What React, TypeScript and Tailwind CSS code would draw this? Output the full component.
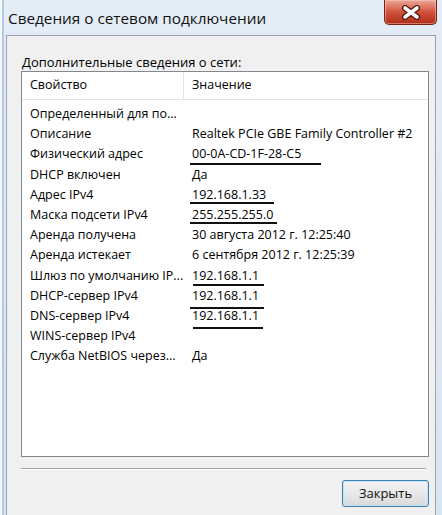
import React from "react";

const rows: [string, string][] = [
  ["Определенный для по...", ""],
  ["Описание", "Realtek PCIe GBE Family Controller #2"],
  ["Физический адрес", "00-0A-CD-1F-28-C5"],
  ["DHCP включен", "Да"],
  ["Адрес IPv4", "192.168.1.33"],
  ["Маска подсети IPv4", "255.255.255.0"],
  ["Аренда получена", "30 августа 2012 г. 12:25:40"],
  ["Аренда истекает", "6 сентября 2012 г. 12:25:39"],
  ["Шлюз по умолчанию IP...", "192.168.1.1"],
  ["DHCP-сервер IPv4", "192.168.1.1"],
  ["DNS-сервер IPv4", "192.168.1.1"],
  ["WINS-сервер IPv4", ""],
  ["Служба NetBIOS через...", "Да"],
];

const font = { fontFamily: '"Open Sans", "Noto Sans", sans-serif' };

export default function App() {
  return (
    <div
      className="w-[442px] h-[515px] overflow-hidden bg-[#f4f7fb] pl-[2px] text-[#000]"
      style={font}
    >
      <div className="h-full border-l-2 border-[#b3cbe2] flex flex-col bg-gradient-to-b from-[#e4edf6] to-[#d9e5f1]">
        {/* Title bar */}
        <div className="h-[35px] shrink-0 flex items-start justify-between">
          <div className="pl-[4px] pt-[8px] text-[15.3px] leading-[20px] text-[#111]">
            Сведения о сетевом подключении
          </div>
          <div className="mr-[5px] w-[53px] h-[25px] rounded-b-[5px] border border-t-0 border-[#7a2418] bg-gradient-to-b from-[#eaa897] via-[#d0523a] to-[#b02d19] shadow-[inset_0_0_0_1px_rgba(255,210,200,0.45)] flex items-center justify-center">
            <svg width="20" height="15" viewBox="0 0 20 15">
              <path
                d="M4 3 L16 12 M16 3 L4 12"
                stroke="#4a140d"
                strokeWidth="6"
                strokeLinecap="round"
              />
              <path
                d="M4 3 L16 12 M16 3 L4 12"
                stroke="#ffffff"
                strokeWidth="3.6"
                strokeLinecap="round"
              />
            </svg>
          </div>
        </div>

        {/* Client area */}
        <div className="flex-1 ml-[2px] mr-[6px] border-l border-t border-r border-[#9aa3ad] bg-[#f0f0f0] flex flex-col pl-[14px] pr-[6px]">
          <div className="pt-[18px] text-[13px] leading-[16px] pl-[1px] h-[35px]">
            Дополнительные сведения о сети:
          </div>
          <div className="relative h-[386px] border border-[#828790] bg-white">
            {/* header */}
            <div className="flex h-[28px] border-b border-[#e3e3e3] text-[12.5px]">
              <div className="w-[162px] border-r border-[#e3e3e3] pl-[8px] flex items-center">
                Свойство
              </div>
              <div className="flex-1 pl-[8px] flex items-center">Значение</div>
            </div>
            <div className="pt-[4px]">
              {rows.map(([k, v], i) => (
                <div key={i} className="flex h-[20.2px] items-center text-[12.5px] leading-[20px] whitespace-nowrap">
                  <div className="w-[162px] pl-[8px]">{k}</div>
                  <div className="flex-1 pl-[8px]">{v}</div>
                </div>
              ))}
            </div>
            {/* annotation underlines */}
            <div className="absolute left-[168px] top-[91px] w-[131px] h-[2px] bg-[#111]" />
            <div className="absolute left-[168px] top-[130px] w-[84px] h-[2px] bg-[#111]" />
            <div className="absolute left-[168px] top-[150px] w-[87px] h-[2px] bg-[#111]" />
            <div className="absolute left-[171px] top-[212px] w-[71px] h-[2px] bg-[#111]" />
            <div className="absolute left-[168px] top-[235px] w-[74px] h-[2px] bg-[#111]" />
            <div className="absolute left-[171px] top-[255px] w-[70px] h-[2px] bg-[#111]" />
          </div>
          <div className="mt-[11px] mr-[3px] h-[2px] border-t border-[#a0a0a0] border-b border-b-white" />
          <div className="flex justify-end pt-[10px]">
            <button className="w-[87px] h-[27px] rounded-[3px] border border-[#3c7fb1] bg-gradient-to-b from-[#f4f4f4] via-[#e8e8e8] to-[#d9d9d9] shadow-[inset_0_0_0_1px_#c5e3f7] text-[13px] text-[#111]">
              Закрыть
            </button>
          </div>
        </div>
      </div>
    </div>
  );
}
